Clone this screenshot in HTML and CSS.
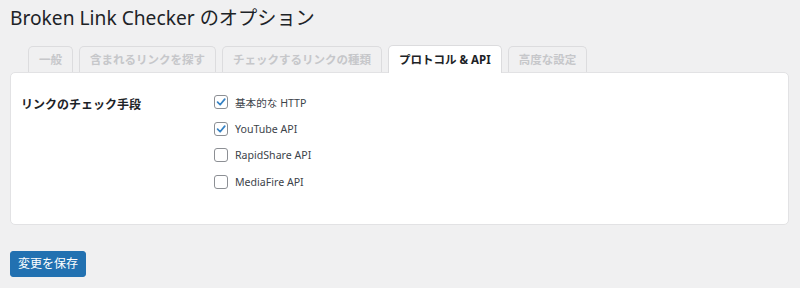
FILE: index.html
```html
<!DOCTYPE html>
<html lang="ja">
<head>
    <meta charset="UTF-8">
    <title>Broken Link Checker のオプション</title>
    <link rel="stylesheet" href="styles.css">
</head>
<body>
    <div class="wrap">
        <h1 class="page-title">Broken Link Checker のオプション</h1>

        <nav class="tabs">
            <a class="tab">一般</a>
            <a class="tab">含まれるリンクを探す</a>
            <a class="tab">チェックするリンクの種類</a>
            <a class="tab tab-active">プロトコル &amp; API</a>
            <a class="tab">高度な設定</a>
        </nav>

        <div class="panel">
            <div class="field-row">
                <div class="field-label">リンクのチェック手段</div>
                <div class="field-options">
                    <label class="option">
                        <span class="box checked"><svg viewBox="0 0 14 14"><polyline points="3,7.2 6,10.2 11.4,3.6"/></svg></span>
                        基本的な HTTP
                    </label>
                    <label class="option">
                        <span class="box checked"><svg viewBox="0 0 14 14"><polyline points="3,7.2 6,10.2 11.4,3.6"/></svg></span>
                        YouTube API
                    </label>
                    <label class="option">
                        <span class="box"></span>
                        RapidShare API
                    </label>
                    <label class="option">
                        <span class="box"></span>
                        MediaFire API
                    </label>
                </div>
            </div>
        </div>

        <button class="save-btn">変更を保存</button>
    </div>
</body>
</html>
```

FILE: styles.css
```css
body, html {
    margin: 0;
    padding: 0;
    background-color: #f0f0f1;
    font-family: "Noto Sans", "Noto Sans CJK JP", sans-serif;
    color: #1d2327;
}
.wrap {
    padding: 4px 11px 0 10px;
}
.page-title {
    margin: 0;
    font-size: 19.2px;
    font-weight: 400;
    line-height: 27px;
    color: #1d2327;
}
.tabs {
    display: flex;
    gap: 6px;
    margin: 14px 0 0 18px;
}
.tab {
    display: block;
    height: 26px;
    box-sizing: border-box;
    padding: 4px 10px 0;
    font-size: 11.5px;
    font-weight: 700;
    line-height: 17px;
    color: #c6c7ca;
    background: #f0f0f1;
    border: 1px solid #dcdcde;
    border-bottom: none;
    border-radius: 5px 5px 0 0;
    margin-top: 1px;
}
.tab-active {
    color: #1d2327;
    background: #fff;
    height: 28px;
    margin-top: 0;
    margin-bottom: -1px;
    padding-top: 5px;
    position: relative;
    z-index: 1;
}
.panel {
    background: #fff;
    border: 1px solid #e2e2e4;
    border-radius: 5px;
    padding: 22px 0 35px 10px;
}
.field-row {
    display: grid;
    grid-template-columns: 193px 1fr;
}
.field-label {
    font-size: 12px;
    font-weight: 700;
    line-height: 18px;
    padding-top: 1px;
}
.field-options {
    display: flex;
    flex-direction: column;
    gap: 12px;
}
.option {
    display: flex;
    align-items: center;
    gap: 7px;
    height: 14.5px;
    font-size: 10.6px;
    color: #3c434a;
}
.box {
    width: 14px;
    height: 14px;
    box-sizing: border-box;
    border: 1px solid #8c8f94;
    border-radius: 3px;
    background: #fff;
    flex: none;
}
.box svg {
    display: block;
    width: 12px;
    height: 12px;
}
.box polyline {
    fill: none;
    stroke: #3582c4;
    stroke-width: 2;
    stroke-linecap: round;
    stroke-linejoin: round;
}
.save-btn {
    display: block;
    margin-top: 26px;
    height: 26px;
    padding: 0 7px;
    border: 1px solid #2271b1;
    border-radius: 3px;
    background: #2271b1;
    color: #fff;
    font-family: "Noto Sans", "Noto Sans CJK JP", sans-serif;
    font-size: 12px;
    line-height: 24px;
}
```
